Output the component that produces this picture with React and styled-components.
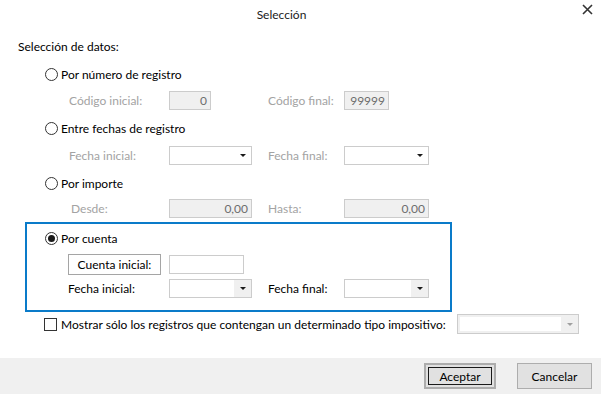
import React from "react";
import styled, { createGlobalStyle } from "styled-components";

const Global = createGlobalStyle`
  html, body {
    margin: 0;
    padding: 0;
    background: #ffffff;
  }
  * {
    box-sizing: border-box;
  }
`;

const Window = styled.div`
  width: 601px;
  height: 394px;
  background: #ffffff;
  display: flex;
  flex-direction: column;
  font-family: Lato, "Noto Sans", sans-serif;
  font-size: 12px;
  color: #000000;
  overflow: hidden;
  white-space: nowrap;
`;

const TitleBar = styled.div`
  height: 26px;
  display: flex;
  align-items: center;
  position: relative;
`;

const Title = styled.div`
  flex: 1;
  text-align: center;
  padding-right: 38px;
  padding-top: 2px;
  color: #1a1a1a;
`;

const Close = styled.div`
  position: absolute;
  right: 7px;
  top: 2px;
  width: 14px;
  height: 14px;
  display: flex;
  align-items: center;
  justify-content: center;
`;

const Body = styled.div`
  flex: 1;
  padding: 10px 18px 0 18px;
`;

const Heading = styled.div`
  height: 20px;
  display: flex;
  align-items: center;
`;

const Options = styled.div`
  display: flex;
  flex-direction: column;
  padding-left: 27px;
`;

const RadioRow = styled.label`
  height: 20px;
  display: flex;
  align-items: center;
  gap: 3px;
  margin-top: ${(p) => p.$mt || 0}px;
`;

const RadioCircle = styled.span`
  width: 13px;
  height: 13px;
  border-radius: 50%;
  border: 1px solid #333333;
  background: #ffffff;
  display: flex;
  align-items: center;
  justify-content: center;
  &::after {
    content: "";
    width: 7px;
    height: 7px;
    border-radius: 50%;
    background: #1a1a1a;
    display: ${(p) => (p.$checked ? "block" : "none")};
  }
`;

const FieldRow = styled.div`
  height: 20px;
  display: grid;
  grid-template-columns: 124px 99px 76px auto;
  align-items: center;
  margin-top: ${(p) => p.$mt || 0}px;
`;

const FieldLabel = styled.span`
  color: ${(p) => (p.$disabled ? "#a3a3a3" : "#000000")};
  padding-left: ${(p) => p.$indent || 0}px;
`;

const TextBox = styled.div`
  width: ${(p) => p.$w}px;
  height: ${(p) => p.$h || 19}px;
  border: 1px solid #cccccc;
  background: ${(p) => (p.$disabled ? "#f0f0f0" : "#ffffff")};
  color: #6d6d6d;
  text-align: right;
  padding-right: 3px;
  line-height: 17px;
`;

const Combo = styled.div`
  width: ${(p) => p.$w}px;
  height: 19px;
  border: 1px solid #cccccc;
  background: #ffffff;
  display: flex;
  justify-content: flex-end;
`;

const ComboArrow = styled.div`
  width: 17px;
  height: 100%;
  background: ${(p) => (p.$shaded ? "#f0f0f0" : "#ffffff")};
  display: flex;
  align-items: center;
  justify-content: center;
  &::after {
    content: "";
    border-left: 3px solid transparent;
    border-right: 3px solid transparent;
    border-top: 3px solid ${(p) => (p.$muted ? "#a0a0a0" : "#1a1a1a")};
    margin-top: 1px;
  }
`;

const AccountBox = styled.div`
  margin-left: 7px;
  margin-top: 4px;
  width: 427px;
  height: 90px;
  border: 2px solid #0a7bc9;
  padding: 4px 0 0 18px;
  display: flex;
  flex-direction: column;
`;

const ButtonRow = styled.div`
  height: 21px;
  display: grid;
  grid-template-columns: 101px auto;
  align-items: center;
  margin-top: 6px;
  margin-left: 23px;
`;

const LabelButton = styled.div`
  width: 93px;
  height: 21px;
  border: 1px solid #a5a5a5;
  background: #ffffff;
  display: flex;
  align-items: center;
  justify-content: center;
`;

const CheckRow = styled.div`
  height: 20px;
  margin-top: 2px;
  padding-left: 26px;
  display: flex;
  align-items: center;
`;

const CheckBox = styled.span`
  width: 13px;
  height: 13px;
  border: 1px solid #333333;
  background: #ffffff;
  margin-right: 4px;
`;

const DisabledCombo = styled.div`
  width: 122px;
  height: 20px;
  margin-left: auto;
  margin-right: 4px;
  border: 1px solid #cccccc;
  background: #f0f0f0;
  display: flex;
  padding: 2px 0 2px 2px;
`;

const ComboInner = styled.div`
  flex: 1;
  background: #ffffff;
`;

const Footer = styled.div`
  height: 36px;
  background: #f0f0f0;
  display: flex;
  justify-content: flex-end;
  align-items: center;
  gap: 21px;
  padding-right: 9px;
`;

const Button = styled.div`
  width: ${(p) => p.$w}px;
  height: 26px;
  background: #e1e1e1;
  border: ${(p) => (p.$default ? "2px solid #adadad" : "1px solid #adadad")};
  display: flex;
  align-items: center;
  justify-content: center;
  padding: ${(p) => (p.$default ? "2px" : "0")};
`;

const Focus = styled.div`
  width: 100%;
  height: 100%;
  border: 1px solid #1a1a1a;
  display: flex;
  align-items: center;
  justify-content: center;
`;

function Radio({ label, checked, mt }) {
  return (
    <RadioRow $mt={mt}>
      <RadioCircle $checked={checked} />
      {label}
    </RadioRow>
  );
}

export default function App() {
  return (
    <Window>
      <Global />
      <TitleBar>
        <Title>Selección</Title>
        <Close>
          <svg width="11" height="11" viewBox="0 0 11 11">
            <path d="M1 1 L10 10 M10 1 L1 10" stroke="#333" strokeWidth="1.6" />
          </svg>
        </Close>
      </TitleBar>
      <Body>
        <Heading>Selección de datos:</Heading>
        <Options>
          <Radio label="Por número de registro" mt={8} />
          <FieldRow $mt={6}>
            <FieldLabel $disabled $indent={24}>Código inicial:</FieldLabel>
            <TextBox $w={42} $disabled>0</TextBox>
            <FieldLabel $disabled>Código final:</FieldLabel>
            <TextBox $w={45} $disabled>99999</TextBox>
          </FieldRow>
          <Radio label="Entre fechas de registro" mt={8} />
          <FieldRow $mt={7}>
            <FieldLabel $disabled $indent={24}>Fecha inicial:</FieldLabel>
            <Combo $w={83}><ComboArrow /></Combo>
            <FieldLabel $disabled>Fecha final:</FieldLabel>
            <Combo $w={85}><ComboArrow /></Combo>
          </FieldRow>
          <Radio label="Por importe" mt={8} />
          <FieldRow $mt={5}>
            <FieldLabel $disabled $indent={26}>Desde:</FieldLabel>
            <TextBox $w={83} $disabled>0,00</TextBox>
            <FieldLabel $disabled>Hasta:</FieldLabel>
            <TextBox $w={85} $disabled>0,00</TextBox>
          </FieldRow>
        </Options>
        <AccountBox>
          <Radio label="Por cuenta" checked />
          <ButtonRow>
            <LabelButton>Cuenta inicial:</LabelButton>
            <TextBox $w={75} />
          </ButtonRow>
          <FieldRow $mt={3}>
            <FieldLabel $indent={23}>Fecha inicial:</FieldLabel>
            <Combo $w={83}><ComboArrow $shaded /></Combo>
            <FieldLabel>Fecha final:</FieldLabel>
            <Combo $w={85}><ComboArrow $shaded /></Combo>
          </FieldRow>
        </AccountBox>
        <CheckRow>
          <CheckBox />
          Mostrar sólo los registros que contengan un determinado tipo impositivo:
          <DisabledCombo>
            <ComboInner />
            <ComboArrow $muted $shaded />
          </DisabledCombo>
        </CheckRow>
      </Body>
      <Footer>
        <Button $w={72} $default>
          <Focus>Aceptar</Focus>
        </Button>
        <Button $w={75}>Cancelar</Button>
      </Footer>
    </Window>
  );
}
